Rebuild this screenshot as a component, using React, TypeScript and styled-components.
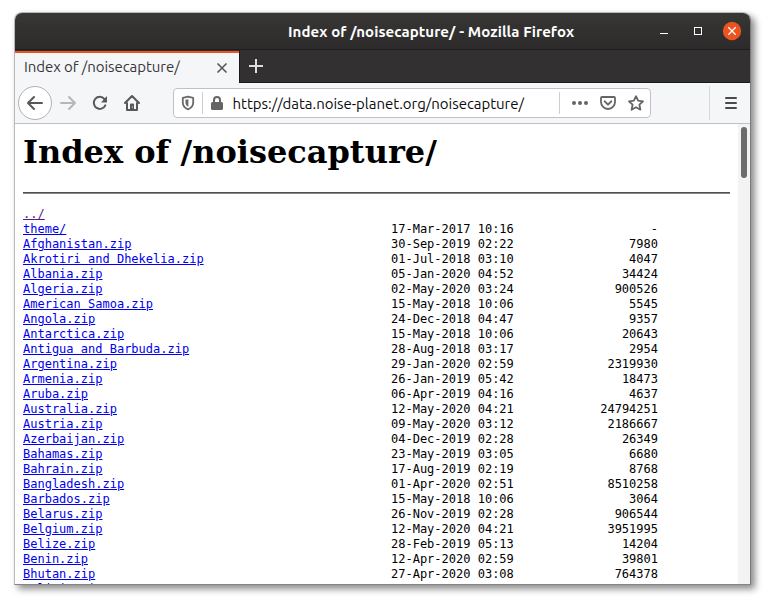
import React from 'react';
import styled, { createGlobalStyle } from 'styled-components';

const GlobalStyle = createGlobalStyle`
  * { box-sizing: border-box; }
  html, body { margin: 0; padding: 0; background: #fff; overflow: hidden; }
`;

const UI_FONT = '"Ubuntu", "Noto Sans", sans-serif';

const Desktop = styled.div`
  width: 770px;
  height: 603px;
  padding: 12px 0 0 14px;
  background: #fff;
`;

const BrowserWindow = styled.div`
  width: 737px;
  height: 573px;
  display: flex;
  flex-direction: column;
  overflow: hidden;
  border: 1px solid #b9b9b9;
  border-right-color: #7b7b7b;
  border-bottom-color: #858585;
  border-radius: 8px 8px 0 0;
  box-shadow: 4px 4px 7px rgba(0, 0, 0, 0.46);
  font-family: ${UI_FONT};
`;

const TitleBar = styled.header`
  flex: none;
  height: 37px;
  display: grid;
  grid-template-columns: 1fr 112px;
  align-items: center;
  background: linear-gradient(#383734, #2d2a2b);
  border-bottom: 1px solid #1d1b1c;
`;

const WindowTitle = styled.div`
  padding: 1px 0 0 273px;
  color: #fff;
  font-size: 15px;
  font-weight: 700;
  line-height: 21px;
  white-space: nowrap;
  letter-spacing: 0.09px;
`;

const WindowControls = styled.div`
  display: flex;
  align-items: center;
  svg { display: block; }
`;

const TabStrip = styled.nav`
  flex: none;
  height: 33px;
  display: flex;
  background: #333031;
  border-bottom: 1px solid #1b191a;
`;

const Tab = styled.div`
  width: 224px;
  height: 33px;
  display: flex;
  align-items: center;
  justify-content: space-between;
  padding: 0 11px 2px 9px;
  margin-top: 1px;
  border-top: 2px solid #e95420;
  background: #f5f6f8;
  svg { display: block; }
`;

const TabLabel = styled.span`
  padding-bottom: 2px;
  color: #37373b;
  font-size: 15px;
  line-height: 20px;
  letter-spacing: -0.06px;
  white-space: nowrap;
`;

const NewTab = styled.div`
  display: flex;
  width: 33px;
  align-items: center;
  justify-content: center;
  border-left: 1px solid #1b191a;
`;

const Toolbar = styled.div`
  flex: none;
  height: 41px;
  display: flex;
  align-items: center;
  padding-left: 3px;
  background: #f5f6f8;
  border-bottom: 1px solid #c0c1c6;
  svg { display: block; flex: none; }
`;

const BackButton = styled.div`
  width: 34px;
  height: 34px;
  display: grid;
  place-items: center;
  background: #fff;
  border: 1px solid #b1b1b3;
  border-radius: 50%;
`;

const ToolButton = styled.div<{ $width: number }>`
  width: ${(p) => p.$width}px;
  height: 32px;
  display: grid;
  place-items: center;
`;

const AddressBar = styled.div`
  width: 478px;
  height: 30px;
  margin-left: 25px;
  display: flex;
  align-items: center;
  padding: 0 6px 0 7px;
  background: #fff;
  border: 1px solid #c0c1c6;
  border-radius: 4px;
`;

const Divider = styled.span<{ $gap?: number }>`
  flex: none;
  width: 1px;
  height: 22px;
  margin-left: ${(p) => p.$gap ?? 0}px;
  background: #cdcdd1;
`;

const Lock = styled.span`
  margin: 0 8px 0 7px;
`;

const Address = styled.span`
  flex: 1;
  min-width: 0;
  padding: 2px 0 0 0.5px;
  color: #0c0c0d;
  font-size: 15px;
  line-height: 20px;
  white-space: nowrap;
  letter-spacing: -0.03px;
`;

const AddressActions = styled.div`
  display: flex;
  align-items: center;
  gap: 12px;
  margin-left: 12px;
`;

const MenuArea = styled.div`
  height: 34px;
  width: 41px;
  margin-left: auto;
  padding-left: 2px;
  display: grid;
  place-items: center;
  border-left: 1px solid #d7d8db;
`;

const Viewport = styled.main`
  flex: 1;
  min-height: 0;
  display: flex;
  background: #fff;
  overflow: hidden;
`;

const Page = styled.div`
  flex: 1;
  padding: 9px 8px 0;
  overflow: hidden;
  color: #000;
`;

const Heading = styled.h1`
  margin: 0;
  font: bold 32px/38px "DejaVu Serif", serif;
`;

const Rule = styled.hr`
  height: 2px;
  margin: 21px 0 13px;
  border: 0;
  border-top: 1px solid #505050;
  border-bottom: 1px solid #858585;
`;

const Listing = styled.div`
  font: 12px/15px "DejaVu Sans Mono", monospace;
`;

const Entry = styled.div`
  height: 15px;
  display: grid;
  grid-template-columns: 368px 122px 145px;
  white-space: pre;
`;

const FileLink = styled.a<{ $visited?: boolean }>`
  justify-self: start;
  color: ${(p) => (p.$visited ? '#551a8b' : '#0000ee')};
  text-decoration: underline;
`;

const Size = styled.span`
  text-align: right;
`;

const ScrollTrack = styled.div`
  width: 12px;
  padding: 3px 3px 0;
  background: #f3f3f3;
`;

const ScrollThumb = styled.div`
  width: 6px;
  height: 51px;
  border-radius: 3px;
  background: #6c6c6c;
`;

const entries: [string, string, string][] = [
  ['../', '', ''],
  ['theme/', '17-Mar-2017 10:16', '-'],
  ['Afghanistan.zip', '30-Sep-2019 02:22', '7980'],
  ['Akrotiri and Dhekelia.zip', '01-Jul-2018 03:10', '4047'],
  ['Albania.zip', '05-Jan-2020 04:52', '34424'],
  ['Algeria.zip', '02-May-2020 03:24', '900526'],
  ['American Samoa.zip', '15-May-2018 10:06', '5545'],
  ['Angola.zip', '24-Dec-2018 04:47', '9357'],
  ['Antarctica.zip', '15-May-2018 10:06', '20643'],
  ['Antigua and Barbuda.zip', '28-Aug-2018 03:17', '2954'],
  ['Argentina.zip', '29-Jan-2020 02:59', '2319930'],
  ['Armenia.zip', '26-Jan-2019 05:42', '18473'],
  ['Aruba.zip', '06-Apr-2019 04:16', '4637'],
  ['Australia.zip', '12-May-2020 04:21', '24794251'],
  ['Austria.zip', '09-May-2020 03:12', '2186667'],
  ['Azerbaijan.zip', '04-Dec-2019 02:28', '26349'],
  ['Bahamas.zip', '23-May-2019 03:05', '6680'],
  ['Bahrain.zip', '17-Aug-2019 02:19', '8768'],
  ['Bangladesh.zip', '01-Apr-2020 02:51', '8510258'],
  ['Barbados.zip', '15-May-2018 10:06', '3064'],
  ['Belarus.zip', '26-Nov-2019 02:28', '906544'],
  ['Belgium.zip', '12-May-2020 04:21', '3951995'],
  ['Belize.zip', '28-Feb-2019 05:13', '14204'],
  ['Benin.zip', '12-Apr-2020 02:59', '39801'],
  ['Bhutan.zip', '27-Apr-2020 03:08', '764378'],
  ['Bolivia.zip', '', ''],
];

const ArrowIcon = ({ color, flip }: { color: string; flip?: boolean }) => (
  <svg width="16" height="16" viewBox="0 0 16 16" fill="none" stroke={color} strokeWidth="2" strokeLinecap="round" strokeLinejoin="round">
    <path d={flip ? 'M1 8H15M9 2l6 6-6 6' : 'M15 8H1M7 2L1 8l6 6'} />
  </svg>
);

const ReloadIcon = () => (
  <svg width="16" height="16" viewBox="0 0 16 16">
    <path d="M13.3 10.3A6 6 0 1 1 12.4 4" fill="none" stroke="#58585a" strokeWidth="2" strokeLinecap="round" />
    <path d="M15 1v6a.6.6 0 0 1-.6.6H9z" fill="#58585a" />
  </svg>
);

const HomeIcon = () => (
  <svg width="16" height="16" viewBox="0 0 16 16" fill="none" stroke="#58585a" strokeWidth="2" strokeLinecap="round" strokeLinejoin="round">
    <path d="M1 8l7-7 7 7M3 8v7h10V8" />
    <path d="M6 15V9.5a1 1 0 0 1 1-1h2a1 1 0 0 1 1 1V15z" fill="#58585a" stroke="none" />
    <path d="M8.4 11.4v1.2" stroke="#d0d0d2" strokeWidth="1" strokeLinecap="butt" />
  </svg>
);

const ShieldIcon = () => (
  <svg width="14" height="16" viewBox="0 0 14 16">
    <path d="M7 1.6L12.2 2.8v4.7c0 3.2-2.1 5.6-5.2 6.9-3.1-1.3-5.2-3.7-5.2-6.9V2.8z" fill="none" stroke="#6a6a6c" strokeWidth="1.8" strokeLinejoin="round" />
    <path d="M7.4 4.2v7.5C5.4 10.7 4.4 9.1 4.4 7.4V4.8z" fill="#6a6a6c" />
  </svg>
);

const LockIcon = () => (
  <svg width="14" height="16" viewBox="0 0 14 16">
    <rect x="1" y="7" width="12" height="8" rx="1.5" fill="#656567" />
    <path d="M4 8V5a3 3 0 0 1 6 0v3" fill="none" stroke="#656567" strokeWidth="2" />
  </svg>
);

const MoreIcon = () => (
  <svg width="16" height="16" viewBox="0 0 16 16" fill="#656567">
    <circle cx="2" cy="8" r="2" /><circle cx="8" cy="8" r="2" /><circle cx="14" cy="8" r="2" />
  </svg>
);

const PocketIcon = () => (
  <svg width="16" height="16" viewBox="0 0 16 16" fill="none" stroke="#656567" strokeWidth="2" strokeLinecap="round" strokeLinejoin="round">
    <path d="M2 2h12a1 1 0 0 1 1 1v4a7 7 0 0 1-14 0V3a1 1 0 0 1 1-1z" strokeWidth="1.8" />
    <path d="M4.7 6.4L8 9.6l3.3-3.2" />
  </svg>
);

const StarIcon = () => (
  <svg width="16" height="16" viewBox="0 0 16 16" fill="none" stroke="#656567" strokeWidth="1.8" strokeLinejoin="round">
    <path d="M8 1.2l2.1 4.5 4.9.6-3.6 3.4 1 5L8 12.3l-4.4 2.4 1-5L1 6.3l4.9-.6z" />
  </svg>
);

const WindowButtonIcons = () => (
  <svg width="104" height="20" viewBox="0 0 104 20" fill="none" stroke="#fff">
    <path d="M22 12.5h8" />
    <rect x="56.5" y="6.5" width="7" height="7" />
    <circle cx="94" cy="10" r="9.2" fill="#e95420" stroke="none" />
    <path d="M90.3 6.3l7.4 7.4M97.7 6.3l-7.4 7.4" strokeWidth="1.3" />
  </svg>
);

export default function App() {
  return (
    <>
      <GlobalStyle />
      <Desktop>
        <BrowserWindow>
          <TitleBar>
            <WindowTitle>Index of /noisecapture/ - Mozilla Firefox</WindowTitle>
            <WindowControls><WindowButtonIcons /></WindowControls>
          </TitleBar>
          <TabStrip>
            <Tab>
              <TabLabel>Index of /noisecapture/</TabLabel>
              <svg width="12" height="12" viewBox="0 0 12 12"><path d="M1.5 1.5l9 9M10.5 1.5l-9 9" stroke="#58585a" strokeWidth="1.6" /></svg>
            </Tab>
            <NewTab>
              <svg width="14" height="14" viewBox="0 0 14 14"><path d="M7 0v14M0 7h14" stroke="#dedede" strokeWidth="2" /></svg>
            </NewTab>
          </TabStrip>
          <Toolbar>
            <BackButton><ArrowIcon color="#58585a" /></BackButton>
            <ToolButton $width={32}><ArrowIcon color="#b7b7b9" flip /></ToolButton>
            <ToolButton $width={32}><ReloadIcon /></ToolButton>
            <ToolButton $width={32}><HomeIcon /></ToolButton>
            <AddressBar>
              <ShieldIcon />
              <Divider $gap={7} />
              <Lock><LockIcon /></Lock>
              <Address>https://data.noise-planet.org/noisecapture/</Address>
              <Divider />
              <AddressActions><MoreIcon /><PocketIcon /><StarIcon /></AddressActions>
            </AddressBar>
            <MenuArea>
              <svg width="12" height="12" viewBox="0 0 12 12"><path d="M1 1h10M1 6h10M1 11h10" stroke="#4b4b4d" strokeWidth="2" strokeLinecap="round" /></svg>
            </MenuArea>
          </Toolbar>
          <Viewport>
            <Page>
              <Heading>Index of /noisecapture/</Heading>
              <Rule />
              <Listing>
                {entries.map(([name, date, size]) => (
                  <Entry key={name}>
                    <FileLink $visited={name === '../'}>{name}</FileLink>
                    <span>{date}</span>
                    <Size>{size}</Size>
                  </Entry>
                ))}
              </Listing>
            </Page>
            <ScrollTrack><ScrollThumb /></ScrollTrack>
          </Viewport>
        </BrowserWindow>
      </Desktop>
    </>
  );
}
